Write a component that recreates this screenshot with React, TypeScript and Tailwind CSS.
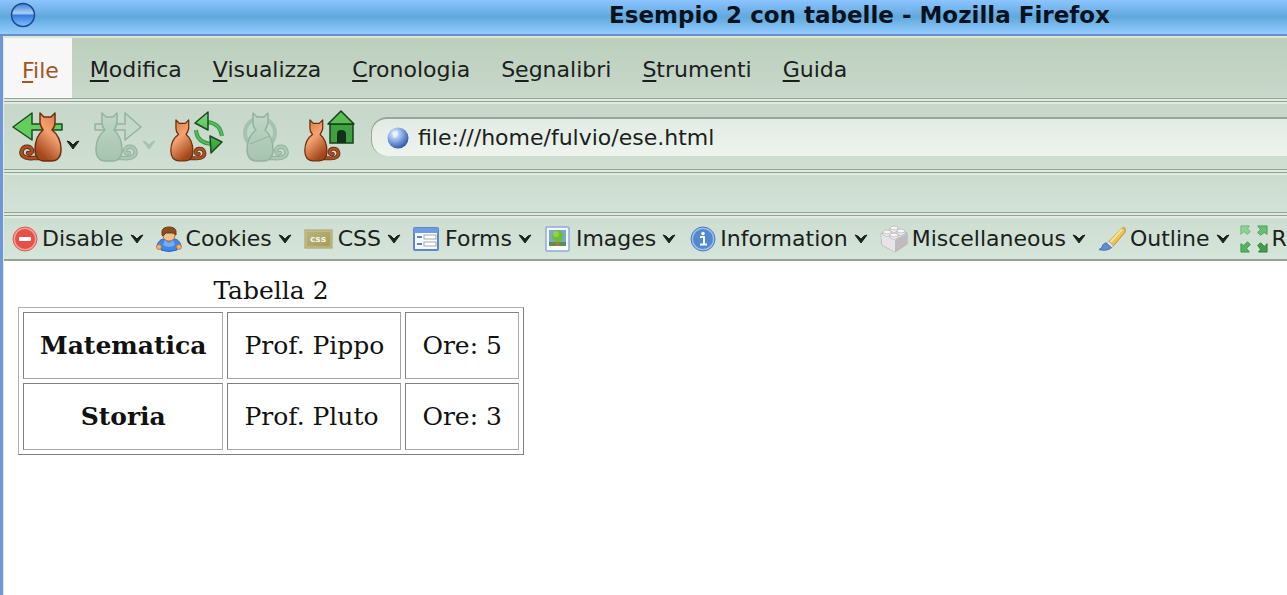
import React from 'react';

interface CatProps {
  transform: string;
  ghost?: boolean;
}

interface MenuEntry {
  before: string;
  key: string;
  after: string;
}

interface ToolEntry {
  label: string;
  icon: React.ReactNode;
}

const menus: MenuEntry[] = [
  { before: '', key: 'M', after: 'odifica' },
  { before: '', key: 'V', after: 'isualizza' },
  { before: '', key: 'C', after: 'ronologia' },
  { before: 'S', key: 'e', after: 'gnalibri' },
  { before: '', key: 'S', after: 'trumenti' },
  { before: '', key: 'G', after: 'uida' },
];

const rows = [
  { subject: 'Matematica', teacher: 'Prof. Pippo', hours: 'Ore: 5' },
  { subject: 'Storia', teacher: 'Prof. Pluto', hours: 'Ore: 3' },
];

function Cat({ transform, ghost }: CatProps) {
  const tail = 'M16 45 H29 C38 46 42 42 40 37 C38 32 30 33 30 38 C30 40 32 41 34 40';
  return (
    <g transform={transform} strokeLinecap="round" strokeLinejoin="round">
      <path d={tail} fill="none" stroke={ghost ? '#93b39e' : '#6e2f0e'} strokeWidth="4.5" />
      <path d={tail} fill="none" stroke={ghost ? '#abc8b5' : '#a8522a'} strokeWidth="2.5" />
      <path
        d="M7 0 L11 4 H18 L22 0 V10 Q21 14 19 17 C25 22 27 30 27 37 C27 44 23 48 18 48 H11 C5 48 1 44 1 36 C1 29 4 21 10 17 Q7 14 7 10 Z"
        fill={ghost ? 'url(#ghostFur)' : 'url(#fur)'}
        stroke={ghost ? '#93b39e' : '#6e2f0e'}
        strokeWidth="1.5"
      />
    </g>
  );
}

function Gradients() {
  return (
    <svg width="0" height="0" className="absolute" aria-hidden="true">
      <defs>
        <linearGradient id="fur" x1="0" y1="0" x2="0.5" y2="1">
          <stop offset="0" stopColor="#d8743f" />
          <stop offset="0.5" stopColor="#f3a272" />
          <stop offset="1" stopColor="#a4481c" />
        </linearGradient>
        <linearGradient id="ghostFur" x1="0" y1="0" x2="0" y2="1">
          <stop offset="0" stopColor="#c0d7c6" />
          <stop offset="1" stopColor="#a5c4b0" />
        </linearGradient>
        <linearGradient id="leaf" x1="0" y1="0" x2="0" y2="1">
          <stop offset="0" stopColor="#7edb78" />
          <stop offset="1" stopColor="#2f9a35" />
        </linearGradient>
        <radialGradient id="globe" cx="0.35" cy="0.3" r="0.75">
          <stop offset="0" stopColor="#eaf2ff" />
          <stop offset="0.45" stopColor="#8fb0e6" />
          <stop offset="1" stopColor="#2c52a4" />
        </radialGradient>
        <linearGradient id="orb" x1="0" y1="0" x2="0" y2="1">
          <stop offset="0" stopColor="#3f7cd4" />
          <stop offset="0.42" stopColor="#a8d0fb" />
          <stop offset="0.52" stopColor="#3a7cdc" />
          <stop offset="1" stopColor="#7cc4fe" />
        </linearGradient>
        <linearGradient id="gold" x1="0" y1="0" x2="1" y2="1">
          <stop offset="0" stopColor="#b8b47c" />
          <stop offset="1" stopColor="#a39b5a" />
        </linearGradient>
      </defs>
    </svg>
  );
}

function Chevron({ color = '#1c241e' }: { color?: string }) {
  return (
    <svg width="14" height="10" viewBox="0 0 14 10" aria-hidden="true">
      <path d="M1 1 L4 2 L7 5 L10 2 L13 1 L7 9 Z" fill={color} stroke={color} strokeLinejoin="round" />
    </svg>
  );
}

const disableIcon = (
  <svg width="26" height="26" viewBox="0 0 26 26">
    <circle cx="13" cy="13" r="12" fill="#f3a19a" stroke="#d8574f" />
    <circle cx="13" cy="13" r="10" fill="#e4514a" />
    <rect x="7" y="11" width="12" height="4" rx="1" fill="#fff" />
  </svg>
);

const cookiesIcon = (
  <svg width="26" height="26" viewBox="0 0 26 26">
    <path d="M8 13 H18 C22 13 25 17 25 21 H21 V24 Q13 27 5 24 V21 H1 C1 17 4 13 8 13 Z" fill="#3f86e6" stroke="#2b62b8" />
    <path d="M9 14 Q13 19 17 14 L19 19 Q13 23 7 19 Z" fill="#74adf4" />
    <circle cx="3" cy="21" r="2.4" fill="#f4b57c" stroke="#c47a3c" />
    <circle cx="23" cy="21" r="2.4" fill="#f4b57c" stroke="#c47a3c" />
    <path d="M7 6 H19 V10 Q18 15 13 15 Q8 15 7 10 Z" fill="#f6c08c" stroke="#b8733c" />
    <path d="M6 9 V5 Q7 1 13 1 Q19 1 20 5 V9 L17 7 H10 L7 10 Z" fill="#86511f" stroke="#6d3d14" />
  </svg>
);

const cssIcon = (
  <svg width="30" height="20" viewBox="0 0 30 20">
    <rect x="1" y="1" width="27" height="18" fill="url(#gold)" stroke="#a49c62" />
    <rect x="2" y="2" width="25" height="16" fill="none" stroke="#c9c590" />
    <text x="14" y="13" textAnchor="middle" fontSize="9" fontWeight="bold" fill="#f6f5e4">
      css
    </text>
  </svg>
);

const formsIcon = (
  <svg width="28" height="24" viewBox="0 0 28 24">
    <rect x="1" y="1" width="24" height="22" rx="1" fill="#f7faff" stroke="#5f86cc" strokeWidth="2" />
    <rect x="1" y="1" width="24" height="5" fill="#6d9ce2" />
    <path d="M4 10 H9 M4 17 H9" stroke="#5a80cf" strokeWidth="2" />
    <rect x="11" y="8" width="12" height="4" fill="#fff" stroke="#a7a9ad" />
    <rect x="11" y="15" width="12" height="4" fill="#fff" stroke="#a7a9ad" />
  </svg>
);

const imagesIcon = (
  <svg width="28" height="26" viewBox="0 0 28 26">
    <rect x="2" y="1" width="23" height="24" rx="1" fill="#f8fbff" stroke="#8fabe0" strokeWidth="1.5" />
    <rect x="5" y="4" width="17" height="16" fill="#79a7dc" />
    <rect x="5" y="16" width="17" height="4" fill="#5c8f4c" />
    <path d="M13.5 13 V20" stroke="#b0793a" strokeWidth="3" />
    <circle cx="13.5" cy="10" r="6" fill="#70bd35" />
    <circle cx="12" cy="8" r="3" fill="#8fd052" />
  </svg>
);

const informationIcon = (
  <svg width="28" height="26" viewBox="0 0 28 26">
    <circle cx="15" cy="13" r="12" fill="#9dbfe9" stroke="#4a78ba" />
    <circle cx="15" cy="13" r="10" fill="#5388cf" />
    <circle cx="15" cy="7.5" r="1.8" fill="#fff" />
    <path d="M12 11 H16 V18 M12 18.5 H19" fill="none" stroke="#fff" strokeWidth="2" />
  </svg>
);

const miscIcon = (
  <svg width="28" height="28" viewBox="0 0 28 28">
    <path d="M1 9 L14 3 L27 8 V19 L15 27 L2 20 Z" fill="#d9d7da" stroke="#aaa8ab" strokeLinejoin="round" />
    <path d="M1 9 L15 15 V27 L2 20 Z" fill="#e6e4e7" />
    <path d="M15 15 L27 8 V19 L15 27 Z" fill="#bebcc0" />
    <g fill="#f6f5f7" stroke="#c3c1c5">
      <path d="M10 3 V6 Q14 9 18 6 V3" />
      <ellipse cx="14" cy="3" rx="4" ry="2" />
      <path d="M3 7 V10 Q7 13 11 10 V7" />
      <ellipse cx="7" cy="7" rx="4" ry="2" />
      <path d="M17 6 V9 Q21 12 25 9 V6" />
      <ellipse cx="21" cy="6" rx="4" ry="2" />
      <path d="M10 10 V13 Q14 16 18 13 V10" />
      <ellipse cx="14" cy="10" rx="4" ry="2" />
    </g>
  </svg>
);

const outlineIcon = (
  <svg width="28" height="26" viewBox="0 0 29 26">
    <path d="M26 1 L28 2 V6 L16 20 L11 16 Z" fill="#f2c24e" stroke="#bf8a2c" strokeLinejoin="round" />
    <path d="M25 3 L13 16" stroke="#fbe39a" strokeWidth="2" />
    <path d="M11 15 L16 20 L14 22 L9 17 Z" fill="#e4e6ea" stroke="#a5a9b0" />
    <path d="M8 17 L14 22 Q9 26 1 24 Q5 22 5 19 Z" fill="#5f8fd2" stroke="#446fb2" />
  </svg>
);

const resizeIcon = (
  <svg width="28" height="28" viewBox="0 0 30 30" strokeLinejoin="round">
    <path d="M1 1 H10 L8 4 L11 7 L8 10 L4 7 L1 10 Z" fill="#8ed393" stroke="#68b570" />
    <path d="M29 1 V10 L26 8 L22 11 L19 8 L22 5 L19 1 Z" fill="#6dbd74" stroke="#4b9d52" />
    <path d="M1 29 V20 L4 22 L8 18 L11 21 L7 25 L10 29 Z" fill="#59b25f" stroke="#3f9547" />
    <path d="M29 29 H20 L22 26 L19 22 L22 19 L26 23 L29 20 Z" fill="#459c4c" stroke="#2e7c36" />
  </svg>
);

const tools: ToolEntry[] = [
  { label: 'Disable', icon: disableIcon },
  { label: 'Cookies', icon: cookiesIcon },
  { label: 'CSS', icon: cssIcon },
  { label: 'Forms', icon: formsIcon },
  { label: 'Images', icon: imagesIcon },
  { label: 'Information', icon: informationIcon },
  { label: 'Miscellaneous', icon: miscIcon },
  { label: 'Outline', icon: outlineIcon },
];

function TitleBar() {
  return (
    <header className="flex h-9 shrink-0 items-center border-b-2 border-[#6a8fc4] bg-linear-to-b from-[#8cc4ff] via-[#60a8dc] to-[#94ccff] pl-2.5">
      <button aria-label="Menu finestra" className="shrink-0 pb-1">
        <svg width="26" height="26" viewBox="0 0 26 26">
          <circle cx="13" cy="13" r="11.5" fill="url(#orb)" stroke="#1c4a92" strokeWidth="1.5" />
        </svg>
      </button>
      <h1 className="ml-[573px] pb-1 text-[23px] leading-7 font-bold whitespace-nowrap text-[#06131f]">
        Esempio 2 con tabelle - Mozilla Firefox
      </h1>
    </header>
  );
}

function MenuBar() {
  return (
    <nav className="flex h-[63px] shrink-0 border-t-2 border-b border-t-[#d9e8d8] border-b-[#96a498] bg-linear-to-b from-[#bccfbc] to-[#c8d8ca]">
      <button className="mr-[18px] bg-[#f7f7f7] pt-1 pr-[13px] pl-[18px] text-[#a3541f]">
        <span className="underline decoration-2 underline-offset-3">F</span>ile
      </button>
      <div className="flex items-center gap-[31px] pt-0.5">
        {menus.map((menu) => (
          <button key={menu.after} className="whitespace-nowrap">
            {menu.before}
            <span className="underline decoration-2 underline-offset-3">{menu.key}</span>
            {menu.after}
          </button>
        ))}
      </div>
    </nav>
  );
}

function NavigationBar() {
  return (
    <div className="mt-0.5 flex h-[69px] shrink-0 items-center border-y border-[#94a296] bg-linear-to-b from-[#c6d6c8] to-[#cfdfd2] pt-0.5 pl-2 shadow-[inset_0_2px_0_#dfeae0]">
      <button aria-label="Indietro" className="flex items-center">
        <svg width="54" height="54" viewBox="0 0 54 54">
          <path d="M1 17 L20 3 V14 H50 V20 H20 V30 Z" fill="#62cf5c" stroke="#1d4a22" strokeWidth="1.5" strokeLinejoin="round" />
          <Cat transform="translate(50 3) scale(-1 1)" />
        </svg>
        <span className="mt-4"><Chevron /></span>
      </button>
      <button aria-label="Avanti" className="ml-3.5 flex items-center" disabled>
        <svg width="48" height="54" viewBox="0 0 48 54">
          <path d="M47 17 L31 3 V14 H1 V20 H31 V30 Z" fill="#c3d8c9" stroke="#93b39e" strokeWidth="1.5" strokeLinejoin="round" />
          <Cat transform="translate(1 3)" ghost />
        </svg>
        <span className="mt-4"><Chevron color="#a8c2af" /></span>
      </button>
      <button aria-label="Ricarica" className="ml-3.5">
        <svg width="56" height="54" viewBox="0 0 56 54">
          <path d="M37 12 Q50 13 52 26 M26 20 Q27 33 42 34" fill="none" stroke="#3a9644" strokeWidth="4" />
          <path d="M37 12 Q50 13 52 26 M26 20 Q27 33 42 34" fill="none" stroke="#58bd58" strokeWidth="2" />
          <path d="M25 13 L38 2 V20 Z M40 26 L52 32 L41 43 Z" fill="url(#leaf)" stroke="#1d4a22" strokeWidth="1.5" strokeLinejoin="round" />
          <Cat transform="translate(0 10) scale(0.85)" />
        </svg>
      </button>
      <button aria-label="Ferma" className="ml-4" disabled>
        <svg width="50" height="54" viewBox="0 0 50 54">
          <circle cx="18" cy="23" r="15" fill="#c0d6c6" stroke="#a6c3b0" strokeWidth="4" />
          <Cat transform="translate(4 3)" ghost />
          <path d="M8 34 L28 26" stroke="#93b39e" />
        </svg>
      </button>
      <button aria-label="Pagina iniziale" className="ml-3">
        <svg width="52" height="54" viewBox="0 0 52 54">
          <Cat transform="translate(0 10) scale(0.85)" />
          <rect x="26" y="14" width="23" height="19" fill="#3fa13f" stroke="#16401a" strokeWidth="1.5" />
          <path d="M24 14 L37 1 L50 14 Z" fill="#58bd52" stroke="#16401a" strokeWidth="1.5" strokeLinejoin="round" />
          <path d="M33 33 V24 Q33 20 37 20 Q42 20 42 24 V33 Z" fill="#12301a" />
        </svg>
      </button>
      <label className="ml-[15px] flex h-[39px] flex-1 items-center gap-2 rounded-l-2xl border-t-2 border-l border-[#97a79a] bg-linear-to-b from-[#e2ebe3] to-[#eef4ee] pl-3.5">
        <svg width="24" height="24" viewBox="0 0 24 24" className="shrink-0">
          <circle cx="12" cy="12" r="10.5" fill="url(#globe)" />
          <path d="M6 7 Q10 3 12 6 Q13 11 8 12 Z" fill="#f4f8ff" opacity="0.7" />
        </svg>
        <input
          aria-label="Indirizzo"
          defaultValue="file:///home/fulvio/ese.html"
          className="min-w-0 flex-1 bg-transparent outline-none"
        />
      </label>
    </div>
  );
}

function DeveloperBar() {
  return (
    <div className="mt-0.5 flex h-[46px] shrink-0 items-center gap-3 overflow-hidden border-t border-b-2 border-[#94a296] bg-linear-to-b from-[#cdddd0] to-[#d6e5d9] pt-0.5 pl-2 shadow-[inset_0_2px_0_#dfeae0]">
      {tools.map((tool) => (
        <button key={tool.label} className="flex shrink-0 items-center gap-1">
          {tool.icon}
          <span className="mr-0.5">{tool.label}</span>
          <Chevron />
        </button>
      ))}
      <button className="-ml-0.5 flex shrink-0 items-center gap-1">
        {resizeIcon}
        R
      </button>
    </div>
  );
}

function PageContent() {
  return (
    <main className="flex-1 bg-white px-3.5 pt-[13px] font-['DejaVu_Serif',serif] text-[25px] leading-[33px] text-[#111]">
      <table className="border-separate border-spacing-1 border border-t-[#b0b0b0] border-r-[#808080] border-b-[#808080] border-l-[#b0b0b0]">
        <caption>Tabella 2</caption>
        <tbody>
          {rows.map((row) => (
            <tr key={row.subject}>
              <th scope="row" className="border border-t-[#808080] border-r-[#a8a8a8] border-b-[#a8a8a8] border-l-[#808080] p-4 text-center font-bold">
                {row.subject}
              </th>
              <td className="border border-t-[#808080] border-r-[#a8a8a8] border-b-[#a8a8a8] border-l-[#808080] p-4">
                {row.teacher}
              </td>
              <td className="border border-t-[#808080] border-r-[#a8a8a8] border-b-[#a8a8a8] border-l-[#808080] p-4">
                {row.hours}
              </td>
            </tr>
          ))}
        </tbody>
      </table>
    </main>
  );
}

export default function App() {
  return (
    <div className="flex min-h-screen flex-col overflow-hidden font-['DejaVu_Sans',sans-serif] text-[22px] text-[#1a211c]">
      <Gradients />
      <TitleBar />
      <div className="flex flex-1 flex-col border-l-3 border-[#7096d6] bg-[#dfeae0] pl-px">
        <MenuBar />
        <NavigationBar />
        <div className="mt-0.5 h-[41px] shrink-0 border-y border-[#94a296] bg-linear-to-b from-[#cbdbce] to-[#d3e2d6] shadow-[inset_0_2px_0_#dfeae0]" />
        <DeveloperBar />
        <PageContent />
      </div>
    </div>
  );
}
